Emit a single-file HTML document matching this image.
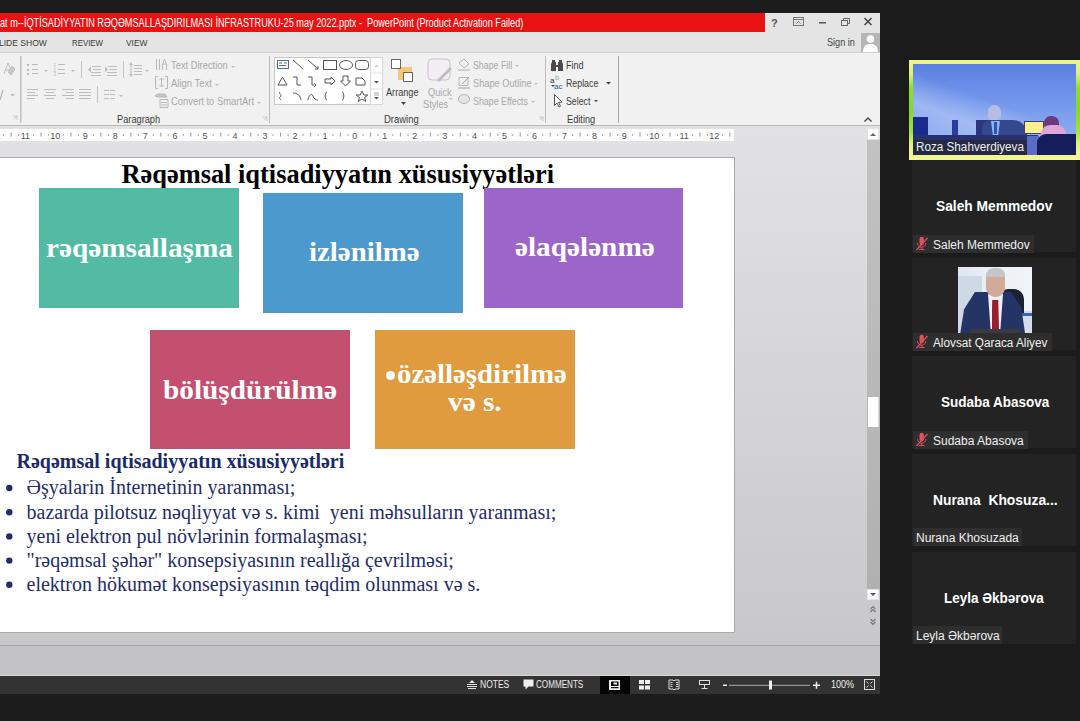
<!DOCTYPE html>
<html><head><meta charset="utf-8">
<style>
*{margin:0;padding:0;box-sizing:border-box}
html,body{width:1080px;height:721px;overflow:hidden;background:#1c1c1c;font-family:"Liberation Sans",sans-serif;position:relative}
.a{position:absolute}
.nw{white-space:nowrap}
.sx{transform-origin:0 50%}
#title{position:absolute;left:0;top:13px;width:765px;height:19px;background:#e91212}
#ctrl{position:absolute;left:765px;top:13px;width:115px;height:19px;background:#e4e4e4}
#tabs{position:absolute;left:0;top:32px;width:880px;height:21px;background:#e4e4e4;border-bottom:1px solid #cfcfcf}
.tab{position:absolute;top:4px;font-size:9.6px;color:#3a3a3a;white-space:nowrap;transform-origin:0 0}
#ribbon{position:absolute;left:0;top:53px;width:880px;height:73px;background:#f1f1f1;border-bottom:1.5px solid #b9b9b9}
.rl{position:absolute;font-size:11px;color:#a8a8a8;white-space:nowrap;transform-origin:0 0}
.gl{position:absolute;font-size:11px;color:#3c3c3c;white-space:nowrap;transform-origin:0 0}
.sep{position:absolute;width:1px;background:#d6d6d6}
#work{position:absolute;left:0;top:126px;width:880px;height:519px;background:linear-gradient(#e2e1e4,#c8c7ca)}
#ruler{position:absolute;left:0;top:129px;width:734px;height:12px;background:#fdfdfd}
.rn{position:absolute;top:129.5px;font-size:9px;line-height:12px;color:#555;text-align:center;width:20px;margin-left:-10px}
#slide{position:absolute;left:0;top:157px;width:735px;height:476px;background:#fff;border-right:1px solid #a8a8a8;border-top:1px solid #a8a8a8;border-bottom:1px solid #a8a8a8}
.box{position:absolute}
.bt{position:absolute;color:#fff;font-family:"Liberation Serif",serif;font-weight:bold;white-space:nowrap;transform-origin:0 0;transform:scaleX(1.045)}
#vscroll{position:absolute;left:867px;top:139px;width:13px;height:451px;background:linear-gradient(#c2c2c2,#b0b0b0)}
#notes{position:absolute;left:0;top:644.5px;width:880px;height:31.5px;background:#c3c2c5;border-top:1.5px solid #a5a5a5;border-bottom:1px solid #d6d6d6}
#status{position:absolute;left:0;top:676px;width:880px;height:18px;background:#333}
#side{position:absolute;left:880px;top:0;width:200px;height:721px;background:#1b1b1b}
.tile{position:absolute;left:912px;width:164px;height:92px;background:#232323}
.tname{position:absolute;color:#fff;font-weight:bold;font-size:13px;white-space:nowrap;transform-origin:0 0}
.lbl{position:absolute;left:913px;height:18px;background:#2e2e2e}
.lt{position:absolute;color:#f0f0f0;font-size:12px;white-space:nowrap;transform-origin:0 0}
</style></head><body>
<div id="title"></div>
<div class="a nw" style="left:0;top:15.5px;color:#fff;font-size:12px;transform:scaleX(0.763);transform-origin:0 0">at m--İQTİSADİYYATIN RƏQƏMSALLAŞDIRILMASI İNFRASTRUKU-25 may 2022.pptx - &nbsp;PowerPoint (Product Activation Failed)</div>
<div id="ctrl"></div>
<div id="tabs"></div>
<div class="tab" style="left:-1px;top:37px;transform:scaleX(0.89)">LIDE SHOW</div>
<div class="tab" style="left:72px;top:37px;transform:scaleX(0.82)">REVIEW</div>
<div class="tab" style="left:126px;top:37px;transform:scaleX(0.87)">VIEW</div>
<div id="ribbon"></div>
<!-- window controls -->
<svg class="a" style="left:765px;top:13px" width="115" height="39" viewBox="765 13 115 39">
 <text x="771" y="27" font-family="Liberation Sans" font-weight="bold" font-size="11" fill="#555">?</text>
 <rect x="793.5" y="17.5" width="10" height="8" fill="none" stroke="#777"/>
 <line x1="793.5" y1="19.5" x2="803.5" y2="19.5" stroke="#777"/>
 <path d="M796.5 23.5 l2 -2 l2 2" fill="none" stroke="#777"/>
 <rect x="819" y="22" width="7" height="1.5" fill="#555"/>
 <rect x="841.5" y="20.5" width="6" height="5" fill="none" stroke="#666"/>
 <path d="M843.5 20.5 v-2 h6 v5 h-2" fill="none" stroke="#666"/>
 <path d="M864.5 18 l7 7 M871.5 18 l-7 7" stroke="#444" stroke-width="1.5"/>
 <rect x="861" y="33" width="19" height="19" fill="#b5b5b5"/>
 <circle cx="870.5" cy="39" r="3.8" fill="#fff"/>
 <path d="M863 52 c0 -6 3 -8 7.5 -8 c4.5 0 7.5 2 7.5 8z" fill="#fff"/>
</svg>
<div class="gl" style="left:827px;top:36px;transform:scaleX(0.83);color:#444">Sign in</div>
<!-- ruler -->


<!-- RIBBON CONTENT -->
<svg class="a" style="left:0;top:52px" width="880" height="74" viewBox="0 52 880 74">
 <g fill="none" stroke="#b4b4b4" stroke-width="1">
  <!-- font group eraser icon -->
  <path d="M4 74 L8 63 L11 70 M5.5 70 L9.5 70" stroke="#c0c0c0"/>
  <path d="M8 72 L12 66 L15 69 L11 75 Z" fill="#c8c8c8" stroke="#c0c0c0"/>
  <path d="M0 100 L3 90" stroke="#b8b8b8" stroke-width="1.3"/>
 </g>
 <path d="M10 94 h5 l-2.5 2.5z" fill="#bdbdbd"/>
 <path d="M13 116 h4 v4 M14 119 l3 -3" stroke="#c8c8c8" fill="none"/>
 <!-- separators -->
 <rect x="20" y="56" width="1.6" height="67" fill="#c4c4c4"/>
 <rect x="269" y="56" width="1" height="67" fill="#bcbcbc"/>
 <rect x="545" y="56" width="1" height="67" fill="#bcbcbc"/>
 <rect x="618" y="56" width="1" height="67" fill="#a8a8a8"/>
 <rect x="81" y="61" width="1" height="17" fill="#c4c4c4"/>
 <rect x="123" y="61" width="1" height="17" fill="#c4c4c4"/>
 <rect x="97" y="86" width="1" height="17" fill="#c4c4c4"/>
 <g fill="#bcbcbc">
  <!-- bullets -->
  <rect x="27" y="64" width="2" height="2"/><rect x="27" y="69" width="2" height="2"/><rect x="27" y="73" width="2" height="2"/>
  <rect x="32" y="64" width="6" height="1"/><rect x="32" y="69" width="6" height="1"/><rect x="32" y="73" width="6" height="1"/>
  <path d="M44 70 h4 l-2 2z"/>
  <!-- numbering -->
  <text x="53.5" y="67" font-family="Liberation Sans" font-size="4.5">1</text><text x="53.5" y="71.5" font-family="Liberation Sans" font-size="4.5">2</text><text x="53.5" y="76" font-family="Liberation Sans" font-size="4.5">3</text>
  <rect x="58" y="64" width="7" height="1"/><rect x="58" y="69" width="7" height="1"/><rect x="58" y="73" width="7" height="1"/>
  <path d="M71 70 h4 l-2 2z"/>
  <!-- indent -->
  <rect x="92" y="66" width="9" height="1"/><rect x="93" y="69" width="8" height="1"/><rect x="91" y="72" width="10" height="1"/><rect x="91" y="75" width="10" height="1"/>
  <path d="M88 69.5 l3 -3 v6z"/>
  <rect x="108" y="66" width="9" height="1"/><rect x="109" y="69" width="8" height="1"/><rect x="107" y="72" width="10" height="1"/><rect x="107" y="75" width="10" height="1"/>
  <path d="M108 69.5 l-3 -3 v6z"/>
  <!-- line spacing -->
  <rect x="134" y="65" width="8" height="1"/><rect x="134" y="68" width="8" height="1"/><rect x="134" y="71" width="8" height="1"/><rect x="134" y="74" width="8" height="1"/>
  <path d="M129 65 l2 -3 l2 3z M129 74 l2 3 l2 -3z"/><rect x="130.5" y="65" width="1" height="9"/>
  <path d="M145 70 h4 l-2 2z"/>
  <!-- align row -->
  <rect x="27" y="89" width="11" height="1"/><rect x="27" y="92" width="8" height="1"/><rect x="27" y="95" width="11" height="1"/><rect x="27" y="98" width="8" height="1"/>
  <rect x="44" y="89" width="12" height="1"/><rect x="46" y="92" width="8" height="1"/><rect x="44" y="95" width="12" height="1"/><rect x="46" y="98" width="8" height="1"/>
  <rect x="62" y="89" width="12" height="1"/><rect x="66" y="92" width="8" height="1"/><rect x="62" y="95" width="12" height="1"/><rect x="66" y="98" width="8" height="1"/>
  <rect x="79" y="89" width="12" height="1"/><rect x="79" y="92" width="12" height="1"/><rect x="79" y="95" width="12" height="1"/><rect x="79" y="98" width="12" height="1"/>
  <!-- columns -->
  <rect x="104" y="90" width="5" height="1"/><rect x="110" y="90" width="5" height="1"/><rect x="104" y="94" width="5" height="1"/><rect x="110" y="94" width="5" height="1"/><rect x="104" y="98" width="5" height="1"/><rect x="110" y="98" width="5" height="1"/>
  <path d="M119 95 h4 l-2 2z"/>
  <!-- dropdowns for text dir etc -->
  <path d="M231 66 h4 l-2 2z M215 84 h4 l-2 2z M257 102 h4 l-2 2z"/>
 </g>
 <g fill="none" stroke="#b8b8b8">
  <!-- text direction icon -->
  <path d="M156.5 59 v11 M159.5 59 v11 M164.5 59 l-2.5 7 M164.5 59 l2.5 7 M163 64 h3 M162.5 66 v4 M166.5 66 v4"/>
  <!-- align text icon -->
  <path d="M158 76.5 h-2.5 v12 h2.5 M165 76.5 h2.5 v12 h-2.5 M161.5 78 v9 M159.5 80 l2 -2 l2 2 M159.5 85 l2 2 l2 -2"/>
  <!-- smartart icon -->
  <path d="M160 99.5 h8 v8 h-8z M161 102.5 h6 M161 105 h6"/>
  <path d="M155 96 l3 -2 h7 l2 3 h-9z" fill="#c4c4c4"/>
  <!-- launchers -->
  <path d="M263 117 h4 v4 M264 120 l3 -3" stroke="#c8c8c8"/>
  <path d="M539 117 h4 v4 M540 120 l3 -3" stroke="#c8c8c8"/>
 </g>
 <!-- shapes gallery -->
 <rect x="274.5" y="57.5" width="108" height="47" fill="#fff" stroke="#c6c6c6"/>
 <rect x="370.5" y="57.5" width="12" height="47" fill="#fff" stroke="#d6d6d6"/>
 <line x1="370.5" y1="73" x2="382.5" y2="73" stroke="#e0e0e0"/>
 <line x1="370.5" y1="89" x2="382.5" y2="89" stroke="#e0e0e0"/>
 <path d="M374 67 l2.5 -2.5 l2.5 2.5z" fill="#d0d0d0"/>
 <path d="M374 81 h5 l-2.5 2.5z" fill="#555"/>
 <path d="M374 93 h5 M374 95 h5" stroke="#aaa"/><path d="M374 97 h5 l-2.5 2.5z" fill="#555"/>
 <g fill="none" stroke="#555" stroke-width="1">
  <rect x="277.5" y="60.5" width="11" height="8" stroke="#4a6a9a"/>
  <path d="M279 63 h3 M279 65.5 h7 M284 63 h3" stroke="#4a6a9a"/>
  <path d="M293 60 l10 9"/>
  <path d="M308 60 l10 9 M318 69 v-3 M318 69 h-3"/>
  <rect x="323.5" y="60.5" width="13" height="9"/>
  <ellipse cx="346" cy="65" rx="6.5" ry="4.5"/>
  <rect x="355.5" y="60.5" width="13" height="9" rx="3"/>
  <path d="M278 85 l4.5 -8 l4.5 8z"/>
  <path d="M293 77 h4 v8 h4"/>
  <path d="M308 77 h4 v8 h2 M314 83 l2 2 l-2 2"/>
  <path d="M325 79 h6 v-2 l4 4 l-4 4 v-2 h-6z"/>
  <path d="M343 76 h5 v5 h2.5 l-5 5 l-5 -5 h2.5z"/>
  <path d="M356 78 h6 l3 3 v4 h-9z"/>
  <path d="M280 92 c-2 2 3 3 0 5 c-2 1 2 3 1 3"/>
  <path d="M293 93 c4 0 7 2 8 7"/>
  <path d="M308 100 c1 -6 4 -7 5 -4 c1 3 3 4 5 4"/>
  <path d="M327 92 c-2 0 -1 3 -2 4 c1 1 0 4 2 4"/>
  <path d="M342 92 c2 0 1 3 2 4 c-1 1 0 4 -2 4"/>
  <path d="M362 91 l1.8 4 h4 l-3.2 2.5 l1.2 4 l-3.8 -2.5 l-3.8 2.5 l1.2 -4 l-3.2 -2.5 h4z"/>
 </g>
 <!-- arrange icon -->
 <rect x="398" y="67" width="14" height="13" fill="#f3c877"/>
 <rect x="391.5" y="59.5" width="9" height="9" fill="#fff" stroke="#666"/>
 <rect x="403.5" y="72.5" width="9" height="9" fill="#fff" stroke="#666"/>
 <path d="M401 102 h5 l-2.5 3z" fill="#444"/>
 <!-- quick styles icon -->
 <rect x="428" y="59" width="22" height="21" rx="4" fill="#f3eef3" stroke="#c8c0c8"/>
 <path d="M437 80 l13 -13 l2 2 l-13 13z" fill="#c0bcc0"/>
 <!-- shape fill/outline/effects icons -->
 <path d="M459 63 l5 -4 l5 5 l-5 4z" fill="none" stroke="#b8b8b8"/>
 <rect x="458" y="69" width="12" height="2" fill="#d0d0d0"/>
 <path d="M459 77.5 h9 v8 h-9z" fill="none" stroke="#b8b8b8"/><path d="M462 84 l7 -7" stroke="#a8a8a8"/>
 <rect x="458" y="87" width="12" height="2" fill="#c8c8c8"/>
 <ellipse cx="464" cy="99" rx="5.5" ry="4.5" fill="#e4e4e4" stroke="#b8b8b8"/>
 <path d="M515 65 h4 l-2 2z M534 83 h4 l-2 2z M531 101 h4 l-2 2z M449 98 h4 l-2 2z" fill="#bdbdbd"/>
 <!-- find icon -->
 <path d="M552 60 h3 v2 h1 v3 h2 v-3 h1 v-2 h3 v2 l1 2 v7 h-5 v-4 h-2 v4 h-5 v-7 l1 -2z" fill="#4a4a4a"/>
 <!-- replace icon -->
 <text x="550" y="83" font-family="Liberation Sans" font-size="8" fill="#333">a</text>
 <text x="555" y="80" font-family="Liberation Sans" font-size="7" fill="#8aa">b</text>
 <text x="554" y="89" font-family="Liberation Sans" font-size="8" fill="#2a5a9a">ac</text>
 <path d="M551 85 l2 2 l2 -2" fill="#2a5a9a"/>
 <path d="M606 82 h5 l-2.5 2.5z" fill="#444"/>
 <!-- select icon -->
 <path d="M554.5 94.5 v11 l2.5 -2.5 l2 4 l1.5 -0.8 l-2 -4 h3.5z" fill="#fff" stroke="#555"/>
 <path d="M594 100 h4 l-2 2z" fill="#444"/>
 <!-- collapse caret -->
 <path d="M864.5 121.5 l3.5 -3.5 l3.5 3.5" fill="none" stroke="#444" stroke-width="1.4"/>
</svg>
<div class="rl" style="left:171px;top:59px;transform:scaleX(0.85)">Text Direction</div>
<div class="rl" style="left:171px;top:77px;transform:scaleX(0.86)">Align Text</div>
<div class="rl" style="left:171px;top:95px;transform:scaleX(0.854)">Convert to SmartArt</div>
<div class="gl" style="left:117px;top:113px;transform:scaleX(0.84)">Paragraph</div>
<div class="gl" style="left:386px;top:86px;transform:scaleX(0.83)">Arrange</div>
<div class="rl" style="left:428px;top:86px;transform:scaleX(0.84)">Quick</div>
<div class="rl" style="left:423px;top:98px;transform:scaleX(0.84)">Styles</div>
<div class="gl" style="left:384px;top:113px;transform:scaleX(0.86)">Drawing</div>
<div class="rl" style="left:473px;top:59px;transform:scaleX(0.8)">Shape Fill</div>
<div class="rl" style="left:473px;top:77px;transform:scaleX(0.84)">Shape Outline</div>
<div class="rl" style="left:473px;top:95px;transform:scaleX(0.805)">Shape Effects</div>
<div class="gl" style="left:566px;top:59px;transform:scaleX(0.82)">Find</div>
<div class="gl" style="left:566px;top:77px;transform:scaleX(0.8)">Replace</div>
<div class="gl" style="left:566px;top:95px;transform:scaleX(0.8)">Select</div>
<div class="gl" style="left:567px;top:113px;transform:scaleX(0.84)">Editing</div>
<div id="work"></div>
<div id="ruler"></div><svg class="a" style="left:0;top:129px" width="734" height="12" viewBox="0 129 734 12"><rect x="3.0" y="134.4" width="1.2" height="1.2" fill="#888"/><rect x="18.0" y="134.4" width="1.2" height="1.2" fill="#888"/><rect x="10.6" y="132.5" width="1" height="4" fill="#999"/><rect x="32.9" y="134.4" width="1.2" height="1.2" fill="#888"/><rect x="47.9" y="134.4" width="1.2" height="1.2" fill="#888"/><rect x="40.5" y="132.5" width="1" height="4" fill="#999"/><rect x="62.9" y="134.4" width="1.2" height="1.2" fill="#888"/><rect x="77.9" y="134.4" width="1.2" height="1.2" fill="#888"/><rect x="70.5" y="132.5" width="1" height="4" fill="#999"/><rect x="92.8" y="134.4" width="1.2" height="1.2" fill="#888"/><rect x="107.8" y="134.4" width="1.2" height="1.2" fill="#888"/><rect x="100.4" y="132.5" width="1" height="4" fill="#999"/><rect x="122.8" y="134.4" width="1.2" height="1.2" fill="#888"/><rect x="137.8" y="134.4" width="1.2" height="1.2" fill="#888"/><rect x="130.4" y="132.5" width="1" height="4" fill="#999"/><rect x="152.7" y="134.4" width="1.2" height="1.2" fill="#888"/><rect x="167.7" y="134.4" width="1.2" height="1.2" fill="#888"/><rect x="160.3" y="132.5" width="1" height="4" fill="#999"/><rect x="182.7" y="134.4" width="1.2" height="1.2" fill="#888"/><rect x="197.7" y="134.4" width="1.2" height="1.2" fill="#888"/><rect x="190.3" y="132.5" width="1" height="4" fill="#999"/><rect x="212.6" y="134.4" width="1.2" height="1.2" fill="#888"/><rect x="227.6" y="134.4" width="1.2" height="1.2" fill="#888"/><rect x="220.2" y="132.5" width="1" height="4" fill="#999"/><rect x="242.6" y="134.4" width="1.2" height="1.2" fill="#888"/><rect x="257.6" y="134.4" width="1.2" height="1.2" fill="#888"/><rect x="250.2" y="132.5" width="1" height="4" fill="#999"/><rect x="272.5" y="134.4" width="1.2" height="1.2" fill="#888"/><rect x="287.5" y="134.4" width="1.2" height="1.2" fill="#888"/><rect x="280.1" y="132.5" width="1" height="4" fill="#999"/><rect x="302.5" y="134.4" width="1.2" height="1.2" fill="#888"/><rect x="317.5" y="134.4" width="1.2" height="1.2" fill="#888"/><rect x="310.1" y="132.5" width="1" height="4" fill="#999"/><rect x="332.4" y="134.4" width="1.2" height="1.2" fill="#888"/><rect x="347.4" y="134.4" width="1.2" height="1.2" fill="#888"/><rect x="340.0" y="132.5" width="1" height="4" fill="#999"/><rect x="362.4" y="134.4" width="1.2" height="1.2" fill="#888"/><rect x="377.4" y="134.4" width="1.2" height="1.2" fill="#888"/><rect x="370.0" y="132.5" width="1" height="4" fill="#999"/><rect x="392.3" y="134.4" width="1.2" height="1.2" fill="#888"/><rect x="407.3" y="134.4" width="1.2" height="1.2" fill="#888"/><rect x="399.9" y="132.5" width="1" height="4" fill="#999"/><rect x="422.3" y="134.4" width="1.2" height="1.2" fill="#888"/><rect x="437.3" y="134.4" width="1.2" height="1.2" fill="#888"/><rect x="429.9" y="132.5" width="1" height="4" fill="#999"/><rect x="452.2" y="134.4" width="1.2" height="1.2" fill="#888"/><rect x="467.2" y="134.4" width="1.2" height="1.2" fill="#888"/><rect x="459.8" y="132.5" width="1" height="4" fill="#999"/><rect x="482.2" y="134.4" width="1.2" height="1.2" fill="#888"/><rect x="497.2" y="134.4" width="1.2" height="1.2" fill="#888"/><rect x="489.8" y="132.5" width="1" height="4" fill="#999"/><rect x="512.1" y="134.4" width="1.2" height="1.2" fill="#888"/><rect x="527.1" y="134.4" width="1.2" height="1.2" fill="#888"/><rect x="519.7" y="132.5" width="1" height="4" fill="#999"/><rect x="542.1" y="134.4" width="1.2" height="1.2" fill="#888"/><rect x="557.1" y="134.4" width="1.2" height="1.2" fill="#888"/><rect x="549.7" y="132.5" width="1" height="4" fill="#999"/><rect x="572.0" y="134.4" width="1.2" height="1.2" fill="#888"/><rect x="587.0" y="134.4" width="1.2" height="1.2" fill="#888"/><rect x="579.6" y="132.5" width="1" height="4" fill="#999"/><rect x="602.0" y="134.4" width="1.2" height="1.2" fill="#888"/><rect x="617.0" y="134.4" width="1.2" height="1.2" fill="#888"/><rect x="609.6" y="132.5" width="1" height="4" fill="#999"/><rect x="631.9" y="134.4" width="1.2" height="1.2" fill="#888"/><rect x="646.9" y="134.4" width="1.2" height="1.2" fill="#888"/><rect x="639.5" y="132.5" width="1" height="4" fill="#999"/><rect x="661.9" y="134.4" width="1.2" height="1.2" fill="#888"/><rect x="676.9" y="134.4" width="1.2" height="1.2" fill="#888"/><rect x="669.5" y="132.5" width="1" height="4" fill="#999"/><rect x="691.8" y="134.4" width="1.2" height="1.2" fill="#888"/><rect x="706.8" y="134.4" width="1.2" height="1.2" fill="#888"/><rect x="699.4" y="132.5" width="1" height="4" fill="#999"/><rect x="721.8" y="134.4" width="1.2" height="1.2" fill="#888"/><rect x="729.4" y="132.5" width="1" height="4" fill="#999"/></svg><div class="rn" style="left:-4.6px">12</div><div class="rn" style="left:25.4px">11</div><div class="rn" style="left:55.3px">10</div><div class="rn" style="left:85.2px">9</div><div class="rn" style="left:115.2px">8</div><div class="rn" style="left:145.2px">7</div><div class="rn" style="left:175.1px">6</div><div class="rn" style="left:205.1px">5</div><div class="rn" style="left:235.0px">4</div><div class="rn" style="left:264.9px">3</div><div class="rn" style="left:294.9px">2</div><div class="rn" style="left:324.9px">1</div><div class="rn" style="left:354.8px">0</div><div class="rn" style="left:384.8px">1</div><div class="rn" style="left:414.7px">2</div><div class="rn" style="left:444.7px">3</div><div class="rn" style="left:474.6px">4</div><div class="rn" style="left:504.6px">5</div><div class="rn" style="left:534.5px">6</div><div class="rn" style="left:564.4px">7</div><div class="rn" style="left:594.4px">8</div><div class="rn" style="left:624.3px">9</div><div class="rn" style="left:654.3px">10</div><div class="rn" style="left:684.2px">11</div><div class="rn" style="left:714.2px">12</div><div id="slide"></div>

<!-- SLIDE CONTENT -->
<div class="a nw" style="left:121.5px;top:161px;font-family:'Liberation Serif',serif;font-weight:bold;font-size:26.4px;line-height:26px;color:#000">Rəqəmsal iqtisadiyyatın xüsusiyyətləri</div>
<div class="box" style="left:39px;top:188px;width:200px;height:120px;background:#53bba3"></div>
<div class="box" style="left:263px;top:193px;width:200px;height:120px;background:#4b99cd"></div>
<div class="box" style="left:484px;top:188px;width:199px;height:120px;background:#9c65c9"></div>
<div class="box" style="left:150px;top:330px;width:200px;height:119px;background:#c4506f"></div>
<div class="box" style="left:375px;top:330px;width:200px;height:119px;background:#e09b3f"></div>
<div class="bt" style="left:46px;top:233.5px;font-size:28px;line-height:28px">rəqəmsallaşma</div>
<div class="bt" style="left:309px;top:238px;font-size:28px;line-height:28px;transform:scaleX(1.03)">izlənilmə</div>
<div class="bt" style="left:515px;top:233px;font-size:28px;line-height:28px">əlaqələnmə</div>
<div class="bt" style="left:163px;top:375.5px;font-size:28px;line-height:28px">bölüşdürülmə</div>
<div class="a" style="left:385.5px;top:370.5px;width:9.5px;height:9.5px;border-radius:50%;background:#fff"></div>
<div class="bt" style="left:397px;top:360px;font-size:28px;line-height:28px;transform:scaleX(1.03)">özəlləşdirilmə</div>
<div class="bt" style="left:448px;top:388px;font-size:28px;line-height:28px">və s.</div>
<div class="a nw" style="left:16.5px;top:450.5px;font-family:'Liberation Serif',serif;font-weight:bold;font-size:20px;line-height:20px;color:#1b2a6b">Rəqəmsal iqtisadiyyatın xüsusiyyətləri</div>
<div class="a nw" style="left:26.5px;top:475.3px;font-family:'Liberation Serif',serif;font-size:20px;line-height:24.2px;color:#1f2d6c">Əşyalarin İnternetinin yaranması;<br>bazarda pilotsuz nəqliyyat və s. kimi &nbsp;yeni məhsulların yaranması;<br>yeni elektron pul növlərinin formalaşması;<br>"rəqəmsal şəhər" konsepsiyasının reallığa çevrilməsi;<br>elektron hökumət konsepsiyasının təqdim olunması və s.</div>
<svg class="a" style="left:0;top:470px" width="20" height="130"><g fill="#1f2d6c"><circle cx="9.3" cy="18" r="3.2"/><circle cx="9.3" cy="42.2" r="3.2"/><circle cx="9.3" cy="66.4" r="3.2"/><circle cx="9.3" cy="90.6" r="3.2"/><circle cx="9.3" cy="114.8" r="3.2"/></g></svg>
<div id="vscroll"></div>
<svg class="a" style="left:867px;top:126px" width="13" height="519" viewBox="867 126 13 519">
 <rect x="867.5" y="128.5" width="11" height="11" fill="#fff" stroke="#e4e4e4"/>
 <path d="M870 136 l3 -3 l3 3z" fill="#666"/>
 <rect x="868" y="397" width="10.5" height="30" fill="#fff"/>
 <rect x="867.5" y="589.5" width="11" height="10" fill="#fff" stroke="#e4e4e4"/>
 <path d="M870 593 h6 l-3 3z" fill="#555"/>
 <path d="M870.5 609 l2.5 -2.5 l2.5 2.5 M870.5 612 l2.5 -2.5 l2.5 2.5" fill="none" stroke="#777" stroke-width="1.1"/>
 <path d="M870.5 619 l2.5 2.5 l2.5 -2.5 M870.5 622 l2.5 2.5 l2.5 -2.5" fill="none" stroke="#777" stroke-width="1.1"/>
</svg>
<div id="notes"></div>
<div id="status"></div>

<!-- STATUS BAR -->
<svg class="a" style="left:0;top:676px" width="880" height="18" viewBox="0 676 880 18">
 <path d="M469 683 l3 -3 l3 3z" fill="#ddd"/>
 <rect x="467" y="684" width="10" height="1" fill="#ddd"/><rect x="467" y="686" width="10" height="1" fill="#ddd"/><rect x="468" y="688" width="8" height="1" fill="#ddd"/>
 <path d="M523.5 679.5 h10 v7 h-5 l-3 3 v-3 h-2z" fill="#eee"/>
 <rect x="600" y="676" width="30" height="18" fill="#050505"/>
 <path d="M609 680 h11 v10 h-11z M611 681.5 v4.5 h7.5 v-4.5z" fill="#eee" fill-rule="evenodd"/><rect x="611" y="687" width="7.5" height="1.2" fill="#050505"/><rect x="613.5" y="682.5" width="3.5" height="2" fill="#eee"/>
 <rect x="639" y="680" width="5" height="4" fill="#eee"/><rect x="645" y="680" width="5" height="4" fill="#eee"/>
 <rect x="639" y="685.5" width="5" height="4" fill="#eee"/><rect x="645" y="685.5" width="5" height="4" fill="#eee"/>
 <path d="M669 680 h4 l1 1 l1 -1 h4 v9 h-4 l-1 1 l-1 -1 h-4z" fill="none" stroke="#ddd"/>
 <path d="M670.5 682.5 h2 M670.5 684.5 h2 M670.5 686.5 h2 M676 682.5 h2 M676 684.5 h2 M676 686.5 h2" stroke="#ddd"/>
 <rect x="699.5" y="680.5" width="10" height="4" fill="none" stroke="#ddd"/>
 <path d="M704.5 685 v3 M701.5 688.5 h6" stroke="#ddd"/>
 <rect x="723" y="684.5" width="4" height="1.5" fill="#eee"/>
 <rect x="729" y="684.8" width="81" height="1" fill="#aaa"/>
 <rect x="769" y="680.5" width="3" height="9" fill="#eee"/>
 <path d="M813 685.3 h7 M816.5 681.8 v7" stroke="#eee" stroke-width="1.5"/>
 <rect x="864.5" y="679.5" width="10" height="10" fill="none" stroke="#ddd"/>
 <path d="M866.5 681.5 l2 2 M872.5 681.5 l-2 2 M866.5 687.5 l2 -2 M872.5 687.5 l-2 -2" stroke="#ddd"/>
</svg>
<div class="a nw" style="left:480px;top:680px;font-size:10px;line-height:10px;color:#eee;transform:scaleX(0.85);transform-origin:0 0">NOTES</div>
<div class="a nw" style="left:536px;top:680px;font-size:10px;line-height:10px;color:#eee;transform:scaleX(0.81);transform-origin:0 0">COMMENTS</div>
<div class="a nw" style="left:831px;top:680px;font-size:10px;line-height:10px;color:#eee;transform:scaleX(0.9);transform-origin:0 0">100%</div>
<div id="side"></div>
<!-- SIDE PANEL -->
<div class="a" style="left:909px;top:60px;width:171px;height:100px;background:linear-gradient(#eef590 0%,#dcf278 14%,#8fe022 28%,#84da1c 50%,#9ee43a 72%,#e2f282 84%,#f2f695 100%)"></div>
<div class="a" style="left:913px;top:64px;width:163px;height:91px;overflow:hidden;background:linear-gradient(180deg,#5c80e2 0%,#7296ec 40%,#86a6ee 70%,#92aeee 100%)">
 <div class="a" style="left:0;top:0;width:163px;height:91px;background:linear-gradient(200deg,rgba(190,205,250,0) 45%,rgba(205,218,252,0.45) 65%,rgba(170,190,240,0.05) 90%)"></div>
 <div class="a" style="left:0;top:53px;width:15px;height:18px;background:#1a2a8e"></div>
 <div class="a" style="left:39px;top:56px;width:6px;height:15px;background:#2a3c9a"></div>
 <div class="a" style="left:63px;top:56px;width:16px;height:15px;background:#2a3480"></div>
 <div class="a" style="left:75px;top:41px;width:13px;height:16px;border-radius:7px 7px 6px 6px;background:#b6bde0"></div>
 <div class="a" style="left:69px;top:56px;width:45px;height:17px;border-radius:8px 14px 0 0;background:#34488e"></div>
 <div class="a" style="left:78px;top:57px;width:9px;height:14px;background:#8ab4f4;clip-path:polygon(0 0,100% 0,80% 100%,20% 100%)"></div>
 <div class="a" style="left:81px;top:58px;width:3px;height:12px;background:#2a56b0"></div>
 <div class="a" style="left:111px;top:57px;width:20px;height:13px;background:#fbf08a;border:1.5px solid #3a3f78"></div>
 <div class="a" style="left:131px;top:52px;width:15px;height:12px;border-radius:7px 7px 4px 4px;background:#6a3a80"></div>
 <div class="a" style="left:128px;top:61px;width:25px;height:12px;border-radius:9px 9px 0 0;background:#dea6d8"></div>
 <div class="a" style="left:0;top:71px;width:125px;height:20px;background:#28306e"></div>
 <div class="a" style="left:114px;top:72px;width:12px;height:19px;background:#5a6cc8"></div>
 <div class="a" style="left:124px;top:70px;width:39px;height:21px;border-radius:9px 0 0 0;background:#161d5c"></div>
 <div class="a" style="left:0;top:76px;width:114px;height:15px;background:rgba(38,40,62,0.88)"></div>
</div>
<div class="lt" style="left:916px;top:140px;font-size:12px;line-height:14px;transform:scaleX(0.975)">Roza Shahverdiyeva</div>

<div class="tile" style="top:160px"></div>
<div class="tname" style="left:936px;top:199px;font-size:14.5px;line-height:14px;transform:scaleX(0.95)">Saleh Memmedov</div>
<div class="lbl" style="top:235px;width:121px"></div>
<div class="lt" style="left:933px;top:238px;line-height:14px">Saleh Memmedov</div>

<div class="tile" style="top:258px"></div>
<div class="a" style="left:958px;top:267px;width:74px;height:68px;overflow:hidden;background:linear-gradient(90deg,#dfe7f0,#eaf0f7 45%,#f0f4f9)">
 <div class="a" style="left:0;top:9px;width:24px;height:59px;background:#cfd9e6"></div>
 <div class="a" style="left:60px;top:44px;width:14px;height:24px;background:#d4ddea"></div>
 <div class="a" style="left:63px;top:46px;width:11px;height:3px;background:#3f62c0"></div>
 <div class="a" style="left:40px;top:22px;width:26px;height:24px;border-radius:10px 10px 0 0;background:#1c2232"></div>
 <div class="a" style="left:2px;top:25px;width:68px;height:43px;background:#243466;clip-path:polygon(22% 0,75% 0,90% 35%,96% 100%,0 100%,6% 40%)"></div>
 <div class="a" style="left:30px;top:27px;width:15px;height:41px;background:#eef1f5;clip-path:polygon(0 0,100% 0,80% 100%,20% 100%)"></div>
 <div class="a" style="left:33.5px;top:33px;width:7.5px;height:33px;background:#9a1e30;clip-path:polygon(10% 0,90% 0,100% 88%,50% 100%,0 88%)"></div>
 <div class="a" style="left:27.5px;top:2px;width:19px;height:28px;border-radius:9px 9px 9px 9px;background:#d2ab98"></div>
 <div class="a" style="left:27.5px;top:1px;width:19px;height:9px;border-radius:9px 9px 2px 2px;background:#c4c6cc"></div>
 <div class="a" style="left:12px;top:62px;width:50px;height:6px;background:#3a3a40"></div>
</div>
<div class="lbl" style="top:333px;width:139px"></div>
<div class="lt" style="left:933px;top:336px;line-height:14px;transform:scaleX(0.98)">Alovsat Qaraca Aliyev</div>

<div class="tile" style="top:356px"></div>
<div class="tname" style="left:941px;top:394.5px;font-size:14.5px;line-height:14px;transform:scaleX(0.931)">Sudaba Abasova</div>
<div class="lbl" style="top:431px;width:115px"></div>
<div class="lt" style="left:933px;top:434px;line-height:14px">Sudaba Abasova</div>

<div class="tile" style="top:454px"></div>
<div class="tname" style="left:933px;top:492.5px;font-size:14.5px;line-height:14px;transform:scaleX(0.955)">Nurana &nbsp;Khosuza...</div>
<div class="lbl" style="top:528px;width:109px"></div>
<div class="lt" style="left:916px;top:531px;line-height:14px">Nurana Khosuzada</div>

<div class="tile" style="top:552px"></div>
<div class="tname" style="left:944px;top:590.5px;font-size:14.5px;line-height:14px;transform:scaleX(0.931)">Leyla Əkbərova</div>
<div class="lbl" style="top:626px;width:89px"></div>
<div class="lt" style="left:916px;top:629px;line-height:14px">Leyla Əkbərova</div>

<svg class="a" style="left:880px;top:0" width="200" height="721" viewBox="880 0 200 721">
 <g id="mic">
 <path d="M919.5 239 a2.2 2.2 0 0 1 4.4 0 v4 a2.2 2.2 0 0 1 -4.4 0z" fill="#e0505a"/>
 <path d="M917.5 243 a4 4 0 0 0 8.4 0 M921.7 247 v2 M919 249.5 h5.5" fill="none" stroke="#e0505a" stroke-width="1"/>
 <path d="M916.5 250 l11 -12" stroke="#e0505a" stroke-width="1.3"/>
 </g>
 <use href="#mic" y="98"/>
 <use href="#mic" y="196"/>
</svg>

</body></html>
